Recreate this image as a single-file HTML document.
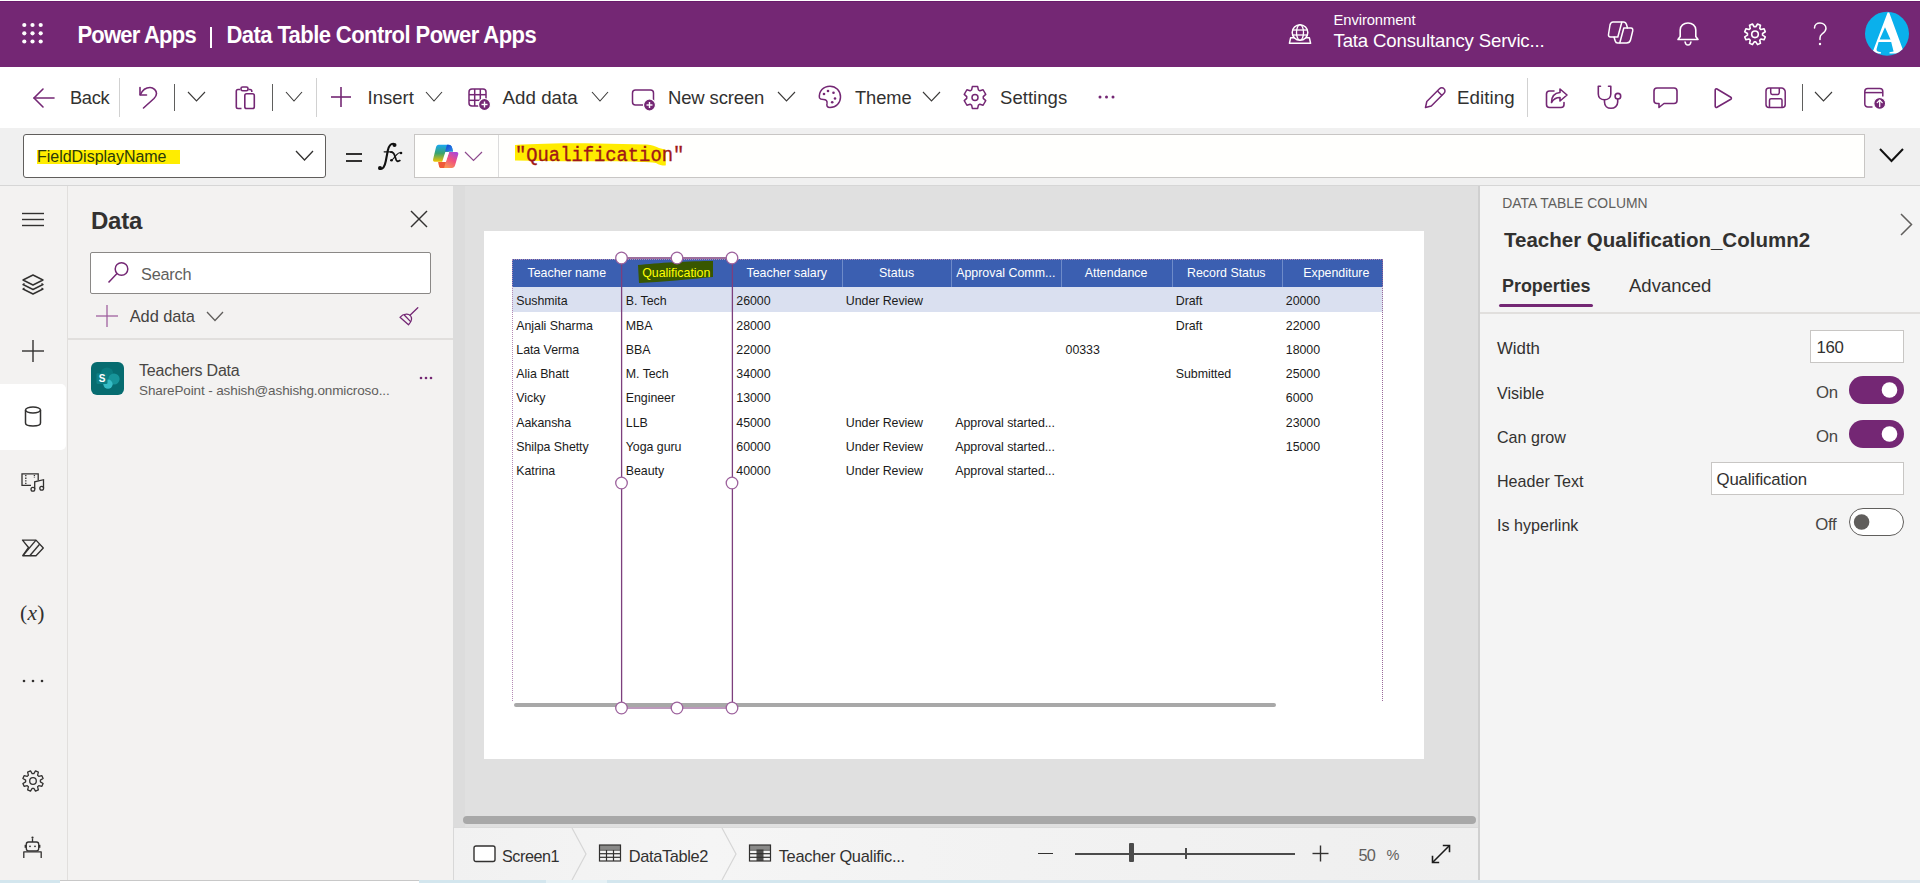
<!DOCTYPE html>
<html><head><meta charset="utf-8"><style>
html,body{margin:0;padding:0;width:1920px;height:883px;overflow:hidden;background:#f3f2f1;}
.r,.t,.s{position:absolute;}
.t{white-space:nowrap;font-family:"Liberation Sans",sans-serif;}
</style></head><body>
<div class="r" style="left:0px;top:0px;width:1920px;height:883px;background:#f3f2f1;"></div>
<div class="r" style="left:0px;top:0px;width:1920px;height:1px;background:#ffffff;"></div>
<div class="r" style="left:0px;top:1px;width:1920px;height:66px;background:#742774;"></div>
<div class="r" style="left:0px;top:1px;width:1920px;height:1px;background:#6a1a6a;"></div>
<div class="r" style="left:0px;top:67px;width:1920px;height:61px;background:#ffffff;"></div>
<div class="r" style="left:0px;top:128px;width:1920px;height:57px;background:#f0f0f0;"></div>
<div class="r" style="left:0px;top:185px;width:1920px;height:1px;background:#d6d6d6;"></div>
<div class="r" style="left:0px;top:186px;width:67px;height:694px;background:#f3f2f1;"></div>
<div class="r" style="left:67px;top:186px;width:1px;height:694px;background:#e1dfdd;"></div>
<div class="r" style="left:68px;top:186px;width:385px;height:694px;background:#f3f2f1;"></div>
<div class="r" style="left:453px;top:186px;width:1026px;height:642px;background:#e0e0e0;"></div>
<div class="r" style="left:453px;top:186px;width:12px;height:642px;background:#dcdcdc;"></div>
<div class="r" style="left:1478px;top:186px;width:2px;height:694px;background:#d0d0d0;"></div>
<div class="r" style="left:1480px;top:186px;width:440px;height:694px;background:#f4f4f4;"></div>
<div class="r" style="left:0px;top:880px;width:1920px;height:3px;background:#d3e6ee;"></div>
<svg class="s" style="left:0px;top:0px;" width="60" height="67" viewBox="0 0 60 67"><circle cx="24.3" cy="25" r="2.1" fill="#fff"/><circle cx="24.3" cy="33.3" r="2.1" fill="#fff"/><circle cx="24.3" cy="41.5" r="2.1" fill="#fff"/><circle cx="32.5" cy="25" r="2.1" fill="#fff"/><circle cx="32.5" cy="33.3" r="2.1" fill="#fff"/><circle cx="32.5" cy="41.5" r="2.1" fill="#fff"/><circle cx="40.7" cy="25" r="2.1" fill="#fff"/><circle cx="40.7" cy="33.3" r="2.1" fill="#fff"/><circle cx="40.7" cy="41.5" r="2.1" fill="#fff"/></svg>
<div class="t" style="left:77.50px;top:24.88px;font-size:22px;line-height:22px;color:#fff;font-weight:bold;letter-spacing:-0.8px;font-family:'Liberation Sans', sans-serif;transform:scaleY(1.1);transform-origin:0 18.6px;">Power Apps</div>
<div class="r" style="left:209.5px;top:26.5px;width:2.5px;height:21px;background:#fff;"></div>
<div class="t" style="left:226.50px;top:24.88px;font-size:22px;line-height:22px;color:#fff;font-weight:bold;letter-spacing:-0.58px;font-family:'Liberation Sans', sans-serif;transform:scaleY(1.1);transform-origin:0 18.6px;">Data Table Control Power Apps</div>
<svg class="s" style="left:1286px;top:22px;" width="28" height="26" viewBox="0 0 28 26"><path d="M4.6 15.8 H23.4 L24.6 21.3 H3.4 Z" fill="none" stroke="#fff" stroke-width="1.5" stroke-linejoin="round"/><circle cx="14" cy="10.5" r="7.8" fill="#742774" stroke="#fff" stroke-width="1.5"/><g fill="none" stroke="#fff" stroke-width="1.3"><ellipse cx="14" cy="10.5" rx="3.5" ry="7.8"/><line x1="6.5" y1="8" x2="21.5" y2="8"/><line x1="6.5" y1="13" x2="21.5" y2="13"/></g></svg>
<div class="t" style="left:1333.50px;top:12.77px;font-size:14.8px;line-height:14.8px;color:#fff;font-weight:normal;letter-spacing:-0.1px;font-family:'Liberation Sans', sans-serif;">Environment</div>
<div class="t" style="left:1333.50px;top:31.56px;font-size:18.6px;line-height:18.6px;color:#fff;font-weight:normal;letter-spacing:-0.15px;font-family:'Liberation Sans', sans-serif;">Tata Consultancy Servic...</div>
<svg class="s" style="left:1600px;top:14px;" width="40" height="38" viewBox="0 0 40 38"><g fill="none" stroke="#fff" stroke-width="1.5" stroke-linejoin="round" stroke-linecap="round"><path d="M13 8 H23.5 C25 8 26 9 26.5 10.5 L27.5 14 H31 C32.5 14 33 15.5 32.7 17 L30.5 26 C30 28 28.5 29 26.5 29 H17.5 C16.5 29 15.5 28 15.2 27 L14 23 H10.5 C9 23 8.3 22 8.5 20.5 L10 11 C10.5 9 11.5 8 13 8 Z"/><path d="M21.8 8.3 L17.8 23 H14.2"/><path d="M27.3 14 H23.8 L19.8 28.8"/></g></svg>
<svg class="s" style="left:1672px;top:18px;" width="32" height="32" viewBox="0 0 32 32"><g fill="none" stroke="#fff" stroke-width="1.6" stroke-linejoin="round"><path d="M6 21.5 H26 L23.8 18.5 V12 C23.8 7.8 20.3 5 16 5 C11.7 5 8.2 7.8 8.2 12 V18.5 Z"/><path d="M13 23.5 C13.3 25.8 14.5 27 16 27 C17.5 27 18.7 25.8 19 23.5"/></g></svg>
<svg class="s" style="left:1739px;top:18px;" width="32" height="32" viewBox="0 0 32 32"><path d="M18.55 6.01 L21.47 7.22 L20.74 10.36 L21.94 11.56 L25.08 10.83 L26.29 13.75 L23.55 15.45 L23.55 17.15 L26.29 18.85 L25.08 21.77 L21.94 21.04 L20.74 22.24 L21.47 25.38 L18.55 26.59 L16.85 23.85 L15.15 23.85 L13.45 26.59 L10.53 25.38 L11.26 22.24 L10.06 21.04 L6.92 21.77 L5.71 18.85 L8.45 17.15 L8.45 15.45 L5.71 13.75 L6.92 10.83 L10.06 11.56 L11.26 10.36 L10.53 7.22 L13.45 6.01 L15.15 8.75 L16.85 8.75Z" fill="none" stroke="#fff" stroke-width="1.6" stroke-linejoin="round"/><circle cx="16" cy="16.3" r="3.3" fill="none" stroke="#fff" stroke-width="1.6"/></svg>
<svg class="s" style="left:1805px;top:18px;" width="30" height="32" viewBox="0 0 30 32"><g fill="none" stroke="#fff" stroke-width="1.5" stroke-linecap="round"><path d="M9.5 10 C9.5 6.8 12 5 15 5 C18.3 5 21 7.3 21 10.3 C21 13.3 19 14.5 17 16 C15.5 17.1 15 18 15 20 V21.5"/></g><circle cx="15" cy="26" r="1.2" fill="#fff"/></svg>
<svg class="s" style="left:1860px;top:8px;" width="54" height="52" viewBox="0 0 54 52"><defs><clipPath id="avc"><circle cx="27" cy="25.7" r="22"/></clipPath></defs><circle cx="27" cy="25.7" r="22" fill="#0ab0ec"/><path clip-path="url(#avc)" fill-rule="evenodd" fill="#fff" d="M27.6 4.6 L29.2 4.6 L43 42 L45.5 45.5 L29.5 45.5 L29.5 44.3 L33.6 43.6 L31.2 34 L18.6 34 L16.6 41 C16.2 43 17.5 43.8 21 44.2 L21 45.5 L10.5 45.5 L13.4 42 Z M25 19.3 L19.6 31.6 L30.5 31.6 Z"/></svg>
<svg class="s" style="left:31px;top:86px;" width="26" height="24" viewBox="0 0 26 24"><g fill="none" stroke="#742774" stroke-width="1.6" stroke-linecap="round" stroke-linejoin="round"><path d="M12 3 L3 12 L12 21"/><line x1="3" y1="12" x2="23" y2="12"/></g></svg>
<div class="t" style="left:70.00px;top:89.41px;font-size:18.3px;line-height:18.3px;color:#323130;font-weight:normal;letter-spacing:-0.35px;font-family:'Liberation Sans', sans-serif;">Back</div>
<div class="r" style="left:119px;top:78px;width:1px;height:39px;background:#d1d1d1;"></div>
<svg class="s" style="left:136px;top:85px;" width="24" height="26" viewBox="0 0 24 26"><g fill="none" stroke="#742774" stroke-width="1.6" stroke-linecap="round" stroke-linejoin="round"><path d="M4 2.5 V10 H10.5"/><path d="M4.5 9.5 C6.5 5 10 2.5 14 2.5 C17.5 2.5 20.5 5.5 20.5 8.5 C20.5 10.5 19.5 12 18 13.5 L7.5 23"/></g></svg>
<div class="r" style="left:174px;top:84px;width:1px;height:27px;background:#5f5e5d;"></div>
<svg class="s" style="left:186px;top:90px;" width="21" height="13" viewBox="0 0 21 13"><polyline points="2,2 10.5,11 19,2" fill="none" stroke="#3b3a39" stroke-width="1.1"/></svg>
<svg class="s" style="left:233px;top:85px;" width="26" height="27" viewBox="0 0 26 27"><g fill="none" stroke="#742774" stroke-width="1.6" stroke-linejoin="round"><path d="M7 4.5 H5 C3.9 4.5 3.3 5.2 3.3 6.3 V21.8 C3.3 22.9 3.9 23.5 5 23.5 H8.5"/><path d="M15.5 4.5 H17 C18.1 4.5 18.8 5.2 18.8 6.3 V7"/><rect x="8" y="2" width="7" height="3.8" rx="1.6"/><rect x="11.8" y="8.7" width="9.5" height="14.8" rx="1.8"/></g></svg>
<div class="r" style="left:272px;top:84px;width:1px;height:27px;background:#5f5e5d;"></div>
<svg class="s" style="left:284px;top:90px;" width="20" height="13" viewBox="0 0 20 13"><polyline points="2,2 10.0,11 18,2" fill="none" stroke="#3b3a39" stroke-width="1.1"/></svg>
<div class="r" style="left:316px;top:78px;width:1px;height:39px;background:#d1d1d1;"></div>
<svg class="s" style="left:329px;top:85px;" width="24" height="24" viewBox="0 0 24 24"><g stroke="#742774" stroke-width="1.6"><line x1="12" y1="2" x2="12" y2="22"/><line x1="2" y1="12" x2="22" y2="12"/></g></svg>
<div class="t" style="left:367.50px;top:89.24px;font-size:18.5px;line-height:18.5px;color:#323130;font-weight:normal;letter-spacing:0px;font-family:'Liberation Sans', sans-serif;">Insert</div>
<svg class="s" style="left:424px;top:90px;" width="20" height="13" viewBox="0 0 20 13"><polyline points="2,2 10.0,11 18,2" fill="none" stroke="#3b3a39" stroke-width="1.1"/></svg>
<svg class="s" style="left:466px;top:86px;" width="26" height="26" viewBox="0 0 26 26"><g fill="none" stroke="#742774" stroke-width="1.5"><rect x="3" y="3" width="17" height="17" rx="3"/><line x1="3" y1="8.7" x2="20" y2="8.7"/><line x1="3" y1="14.3" x2="14" y2="14.3"/><line x1="8.7" y1="3" x2="8.7" y2="20"/><line x1="14.3" y1="3" x2="14.3" y2="14"/></g><circle cx="18.5" cy="18.5" r="6" fill="#742774" stroke="#fff" stroke-width="1.2"/><g stroke="#fff" stroke-width="1.4"><line x1="18.5" y1="15.5" x2="18.5" y2="21.5"/><line x1="15.5" y1="18.5" x2="21.5" y2="18.5"/></g></svg>
<div class="t" style="left:502.50px;top:89.07px;font-size:18.7px;line-height:18.7px;color:#323130;font-weight:normal;letter-spacing:0.05px;font-family:'Liberation Sans', sans-serif;">Add data</div>
<svg class="s" style="left:589.5px;top:90px;" width="20" height="13" viewBox="0 0 20 13"><polyline points="2,2 10.0,11 18,2" fill="none" stroke="#3b3a39" stroke-width="1.1"/></svg>
<svg class="s" style="left:630px;top:86px;" width="28" height="26" viewBox="0 0 28 26"><g fill="none" stroke="#742774" stroke-width="1.5"><rect x="2.5" y="4" width="21" height="15" rx="3"/></g><circle cx="19.5" cy="19" r="6" fill="#742774" stroke="#fff" stroke-width="1.2"/><g stroke="#fff" stroke-width="1.4"><line x1="19.5" y1="16" x2="19.5" y2="22"/><line x1="16.5" y1="19" x2="22.5" y2="19"/></g></svg>
<div class="t" style="left:668.00px;top:89.24px;font-size:18.5px;line-height:18.5px;color:#323130;font-weight:normal;letter-spacing:-0.15px;font-family:'Liberation Sans', sans-serif;">New screen</div>
<svg class="s" style="left:775.5px;top:90px;" width="21" height="13" viewBox="0 0 21 13"><polyline points="2,2 10.5,11 19,2" fill="none" stroke="#3b3a39" stroke-width="1.1"/></svg>
<svg class="s" style="left:815px;top:85px;" width="28" height="26" viewBox="0 0 28 26"><g fill="none" stroke="#742774" stroke-width="1.5"><path d="M4.5 13 C3.5 6 8.5 1.2 15 1.2 C21 1.2 25.5 6 25.5 12 C25.5 18 21 22.5 15 22.5 C12 22.5 11.5 20.5 12 18.5 C12.5 16 11 14.5 8.5 14.5 C6.5 14.5 5 14 4.5 13 Z"/></g><g fill="#742774"><circle cx="9" cy="9" r="1.3"/><circle cx="13" cy="6" r="1.3"/><circle cx="18.5" cy="7.8" r="1.3"/><circle cx="20" cy="13.5" r="1.3"/><circle cx="17.2" cy="17.3" r="1.3"/></g></svg>
<div class="t" style="left:855.00px;top:89.41px;font-size:18.3px;line-height:18.3px;color:#323130;font-weight:normal;letter-spacing:-0.05px;font-family:'Liberation Sans', sans-serif;">Theme</div>
<svg class="s" style="left:921px;top:90px;" width="21" height="13" viewBox="0 0 21 13"><polyline points="2,2 10.5,11 19,2" fill="none" stroke="#3b3a39" stroke-width="1.1"/></svg>
<svg class="s" style="left:961px;top:84px;" width="28" height="28" viewBox="0 0 28 28"><path d="M11.34 2.62 L16.66 2.62 L17.38 5.92 L18.87 6.78 L22.09 5.75 L24.75 10.37 L22.26 12.64 L22.26 14.36 L24.75 16.63 L22.09 21.25 L18.87 20.22 L17.38 21.08 L16.66 24.38 L11.34 24.38 L10.62 21.08 L9.13 20.22 L5.91 21.25 L3.25 16.63 L5.74 14.36 L5.74 12.64 L3.25 10.37 L5.91 5.75 L9.13 6.78 L10.62 5.92Z" fill="none" stroke="#742774" stroke-width="1.5" stroke-linejoin="round"/><circle cx="14" cy="13.5" r="3.0" fill="none" stroke="#742774" stroke-width="1.5"/></svg>
<div class="t" style="left:1000.00px;top:89.24px;font-size:18.5px;line-height:18.5px;color:#323130;font-weight:normal;letter-spacing:0.05px;font-family:'Liberation Sans', sans-serif;">Settings</div>
<svg class="s" style="left:1097px;top:93px;" width="20" height="8" viewBox="0 0 20 8"><g fill="#742774"><circle cx="3" cy="4" r="1.5"/><circle cx="9.5" cy="4" r="1.5"/><circle cx="16" cy="4" r="1.5"/></g></svg>
<svg class="s" style="left:1422px;top:85px;" width="26" height="26" viewBox="0 0 26 26"><g fill="none" stroke="#742774" stroke-width="1.5" stroke-linejoin="round"><path d="M3.5 22.5 L4.8 16.5 L17.5 3.8 C18.8 2.5 20.8 2.5 22 3.8 C23.3 5 23.3 7 22 8.3 L9.3 21 Z"/><line x1="15.5" y1="6" x2="20" y2="10.5"/></g></svg>
<div class="t" style="left:1457.00px;top:89.07px;font-size:18.7px;line-height:18.7px;color:#323130;font-weight:normal;letter-spacing:0.1px;font-family:'Liberation Sans', sans-serif;">Editing</div>
<div class="r" style="left:1527px;top:78px;width:1px;height:39px;background:#d1d1d1;"></div>
<svg class="s" style="left:1543px;top:85px;" width="28" height="26" viewBox="0 0 28 26"><g fill="none" stroke="#742774" stroke-width="1.6" stroke-linejoin="round" stroke-linecap="round"><path d="M11 6 H6.5 C4.8 6 3.5 7.3 3.5 9 V19.5 C3.5 21.2 4.8 22.5 6.5 22.5 H18 C19.7 22.5 21 21.2 21 19.5 V17.5"/><path d="M17 4 L24 10 L17 16 V12.5 C13 12.5 10.5 14 8.5 17.5 C8.5 12 11.5 8 17 7.5 Z"/></g></svg>
<svg class="s" style="left:1594px;top:82px;" width="32" height="32" viewBox="0 0 32 32"><g fill="none" stroke="#742774" stroke-width="1.6" stroke-linecap="round" stroke-linejoin="round"><path d="M6.5 4.3 H4.3 V12 C4.3 15.5 7 17.8 10.5 17.8 C14 17.8 16.8 15.5 16.8 12 V4.3 H14.5"/><path d="M10.5 17.8 V20 C10.5 23.8 13.3 26.3 17 26.3 C20.7 26.3 23.7 23.8 23.7 20 V17.2"/><circle cx="23.9" cy="14.2" r="2.8"/></g></svg>
<svg class="s" style="left:1651px;top:84px;" width="30" height="28" viewBox="0 0 30 28"><g fill="none" stroke="#742774" stroke-width="1.6" stroke-linejoin="round"><path d="M6 4 H23 C24.7 4 26 5.3 26 7 V16.5 C26 18.2 24.7 19.5 23 19.5 H13 L8 23.5 V19.5 H6 C4.3 19.5 3 18.2 3 16.5 V7 C3 5.3 4.3 4 6 4 Z"/></g></svg>
<svg class="s" style="left:1710px;top:84px;" width="26" height="28" viewBox="0 0 26 28"><g fill="none" stroke="#742774" stroke-width="1.6" stroke-linejoin="round"><path d="M5.2 6 C5.2 5 6.2 4.5 7 5 L20.8 13.3 C21.6 13.8 21.6 14.8 20.8 15.3 L7 23.3 C6.2 23.8 5.2 23.3 5.2 22.3 Z"/></g></svg>
<svg class="s" style="left:1763px;top:84px;" width="28" height="28" viewBox="0 0 28 28"><g fill="none" stroke="#742774" stroke-width="1.5" stroke-linejoin="round"><path d="M3 7 C3 5.3 4.3 4 6 4 H18.5 C19.5 4 20.3 4.4 21 5.1 C21.8 5.9 22.2 6.8 22.2 7.8 V20.5 C22.2 22.2 20.9 23.5 19.2 23.5 H6 C4.3 23.5 3 22.2 3 20.5 Z"/><path d="M7.7 4 V8.6 C7.7 9.6 8.2 10.4 9.2 10.4 H14.8 C15.8 10.4 16.3 9.6 16.3 8.6 V4"/><path d="M6.5 23.5 V16.2 C6.5 15.3 7.2 14.7 8 14.7 H17.5 C18.4 14.7 19 15.3 19 16.2 V23.5"/></g></svg>
<div class="r" style="left:1802px;top:84px;width:1px;height:27px;background:#5f5e5d;"></div>
<svg class="s" style="left:1813px;top:90px;" width="21" height="13" viewBox="0 0 21 13"><polyline points="2,2 10.5,11 19,2" fill="none" stroke="#3b3a39" stroke-width="1.1"/></svg>
<svg class="s" style="left:1861px;top:84px;" width="30" height="30" viewBox="0 0 30 30"><g fill="none" stroke="#742774" stroke-width="1.5"><path d="M11.5 23 H6.8 C5.1 23 3.8 21.7 3.8 20 V7.5 C3.8 5.8 5.1 4.5 6.8 4.5 H18.8 C20.5 4.5 21.8 5.8 21.8 7.5 V12.5"/><line x1="3.8" y1="8.6" x2="21.8" y2="8.6"/></g><circle cx="18.7" cy="19.4" r="5.9" fill="#742774" stroke="#fff" stroke-width="1.1"/><g stroke="#fff" stroke-width="1.3" fill="none" stroke-linecap="round" stroke-linejoin="round"><line x1="18.7" y1="22.6" x2="18.7" y2="16.3"/><polyline points="16.2,18.6 18.7,16.1 21.2,18.6"/></g></svg>
<div class="r" style="left:23px;top:134px;width:303px;height:44px;background:#ffffff;border:1px solid #605e5c;border-radius:3px;box-sizing:border-box;"></div>
<div class="r" style="left:37px;top:149.5px;width:143px;height:14.5px;background:#ffed00;"></div>
<div class="t" style="left:37.00px;top:148.96px;font-size:16px;line-height:16px;color:#2b3a0a;font-weight:normal;letter-spacing:-0.02px;font-family:'Liberation Sans', sans-serif;">FieldDisplayName</div>
<svg class="s" style="left:293.5px;top:149px;" width="21" height="13" viewBox="0 0 21 13"><polyline points="2,2 10.5,11 19,2" fill="none" stroke="#323130" stroke-width="1.3"/></svg>
<div class="r" style="left:345.5px;top:153px;width:16px;height:2px;background:#323130;"></div>
<div class="r" style="left:345.5px;top:160px;width:16px;height:2px;background:#323130;"></div>
<svg class="s" style="left:370px;top:138px;" width="40" height="36" viewBox="0 0 40 36"><g fill="none" stroke="#111" stroke-linecap="round"><path d="M9.5 30.8 C12.8 31.6 14.8 28.5 15.8 23 L17.8 12.5 C18.8 8 20.5 5.7 23.3 5.8" stroke-width="2.1"/><line x1="14.2" y1="13.8" x2="22" y2="13.8" stroke-width="1.3"/><path d="M21 14.2 C23.6 14 24.3 16 25 18.5 L26.2 22 C26.8 23.5 28.3 23.6 29.8 22.6" stroke-width="1.8"/><path d="M31.2 14.5 C29.5 14.2 28 15 26.5 16.8 L23 21 C22 22.3 21.4 22.6 20.8 22.4" stroke-width="1.1"/></g><g fill="#111"><circle cx="10" cy="30" r="2"/><circle cx="24.5" cy="7" r="2"/><circle cx="21.5" cy="22.2" r="1.3"/><circle cx="31" cy="15" r="1.3"/></g></svg>
<div class="r" style="left:414px;top:134px;width:1451px;height:44px;background:#fffffd;border:1px solid #c8c6c4;box-sizing:border-box;"></div>
<div class="r" style="left:498px;top:135px;width:1px;height:42px;background:#dcdcdc;"></div>
<svg class="s" style="left:426px;top:138px;" width="36" height="34" viewBox="0 0 36 34"><defs>
<linearGradient id="cg1" x1="0" y1="0" x2="0" y2="1"><stop offset="0" stop-color="#19a8f2"/><stop offset="0.5" stop-color="#3aa36e"/><stop offset="1" stop-color="#f4c400"/></linearGradient>
<linearGradient id="cg2" x1="1" y1="0" x2="0.3" y2="1"><stop offset="0" stop-color="#9d46ea"/><stop offset="0.5" stop-color="#f0527e"/><stop offset="1" stop-color="#fba24c"/></linearGradient>
<linearGradient id="cg3" x1="0" y1="0" x2="1" y2="1"><stop offset="0" stop-color="#1340cc"/><stop offset="1" stop-color="#2c8ff0"/></linearGradient>
</defs>
<path d="M12.5 6.8 H22.5 C24.5 6.8 25.5 8 26.2 10 L27 13.6 H22.8 L19.7 23.8 H8.7 C7.3 23.8 6.8 22.8 7.1 21.3 L10 9.3 C10.4 7.8 11.3 6.8 12.5 6.8 Z" fill="url(#cg1)"/>
<path d="M21 6.8 H22.5 C24.5 6.8 25.5 8 26.2 10 L27 13.6 H19.1 Z" fill="url(#cg3)"/>
<path d="M23 14 H30.5 C32 14 32.6 15 32.2 16.5 L29 27.5 C28.5 29 27.5 30 25.8 30 H14.8 C14 30 13.4 29.3 13.1 28.5 L12.3 24 H19.6 Z" fill="url(#cg2)"/>
<path d="M12.3 24 H19.6 L18.1 30 H14.8 C14 30 13.4 29.3 13.1 28.5 Z" fill="#ef5a38"/><path d="M19.3 13.9 H23.2 L19.9 23.9 H16.1 Z" fill="#fff"/></svg>
<svg class="s" style="left:463px;top:150.3px;" width="21" height="12.5" viewBox="0 0 21 12.5"><polyline points="2,2 10.5,10.5 19,2" fill="none" stroke="#8d4a8d" stroke-width="1.2"/></svg>
<svg class="s" style="left:510px;top:140px;" width="170" height="30" viewBox="0 0 170 30"><path d="M5 4.9 C25 3.6 50 3.1 75 3.2 L137 4.6 C142 5 145 6.5 149 8 L155.8 9.8 L155.8 25.2 C155 26 150 25.5 146 23 C140 21.6 100 21.2 50 21.2 L5 20.6 Z" fill="#ffec00"/></svg>
<div class="t" style="left:515.30px;top:146.17px;font-size:20px;line-height:20px;color:#a01818;font-weight:normal;letter-spacing:0px;font-family:'Liberation Mono', monospace;transform:scaleX(0.94);transform-origin:0 0;-webkit-text-stroke:0.35px #a01818;">"Qualification"</div>
<svg class="s" style="left:1878px;top:147px;" width="27" height="16" viewBox="0 0 27 16"><polyline points="2,2 13.5,14 25,2" fill="none" stroke="#111" stroke-width="2"/></svg>
<svg class="s" style="left:19px;top:209px;" width="28" height="20" viewBox="0 0 28 20"><g stroke="#323130" stroke-width="1.4"><line x1="3" y1="4.5" x2="25" y2="4.5"/><line x1="3" y1="10.5" x2="25" y2="10.5"/><line x1="3" y1="16.5" x2="25" y2="16.5"/></g></svg>
<svg class="s" style="left:19px;top:272px;" width="28" height="26" viewBox="0 0 28 26"><g fill="none" stroke="#323130" stroke-width="1.4" stroke-linejoin="round"><path d="M14 3 L24 8 L14 13 L4 8 Z"/><path d="M5.5 11.5 L4 12.5 L14 17.5 L24 12.5 L22.5 11.5"/><path d="M5.5 16 L4 17 L14 22 L24 17 L22.5 16"/></g></svg>
<svg class="s" style="left:19px;top:337px;" width="28" height="28" viewBox="0 0 28 28"><g stroke="#323130" stroke-width="1.4"><line x1="14" y1="3" x2="14" y2="25"/><line x1="3" y1="14" x2="25" y2="14"/></g></svg>
<div class="r" style="left:0px;top:384px;width:66px;height:66px;background:#ffffff;border-radius:0 5px 5px 0;"></div>
<svg class="s" style="left:20px;top:403px;" width="26" height="28" viewBox="0 0 26 28"><g fill="none" stroke="#323130" stroke-width="1.5"><ellipse cx="13" cy="7" rx="7.5" ry="3"/><path d="M5.5 7 V20 C5.5 21.7 8.8 23 13 23 C17.2 23 20.5 21.7 20.5 20 V7"/></g></svg>
<svg class="s" style="left:19px;top:470px;" width="28" height="26" viewBox="0 0 28 26"><g fill="none" stroke="#323130" stroke-width="1.3"><path d="M12 15.3 H3 V3.8 H19.2 V10.5"/><line x1="6.8" y1="5" x2="6.8" y2="14.5" stroke-dasharray="1.3 1.3"/><line x1="15.4" y1="5" x2="15.4" y2="8" stroke-dasharray="1.3 1.3"/><path d="M15.7 19 V11.8 L24.5 9.7 V18"/><circle cx="13.9" cy="19.2" r="1.9"/><circle cx="22.7" cy="18.2" r="1.9"/></g></svg>
<svg class="s" style="left:16px;top:533px;" width="34" height="30" viewBox="0 0 34 30"><g fill="none" stroke="#323130" stroke-width="1.35" stroke-linejoin="round"><path d="M6.5 7.1 H20 L27.3 15 L20 22.7 H6.8 L12.5 14.5 Z"/><line x1="20" y1="7.1" x2="6.8" y2="22.7"/><line x1="23.6" y1="11.3" x2="13.8" y2="22.7"/></g></svg>
<div class="t" style="left:20.00px;top:603.02px;font-size:21.5px;line-height:21.5px;color:#323130;font-weight:normal;letter-spacing:0.3px;font-family:'Liberation Serif', serif;">(<i>x</i>)</div>
<svg class="s" style="left:19px;top:674px;" width="28" height="14" viewBox="0 0 28 14"><g fill="#323130"><circle cx="5" cy="7" r="1.3"/><circle cx="14" cy="7" r="1.3"/><circle cx="23" cy="7" r="1.3"/></g></svg>
<svg class="s" style="left:19px;top:767px;" width="28" height="28" viewBox="0 0 28 28"><path d="M16.50 3.90 L19.37 5.09 L18.61 8.21 L19.79 9.39 L22.91 8.63 L24.10 11.50 L21.35 13.17 L21.35 14.83 L24.10 16.50 L22.91 19.37 L19.79 18.61 L18.61 19.79 L19.37 22.91 L16.50 24.10 L14.83 21.35 L13.17 21.35 L11.50 24.10 L8.63 22.91 L9.39 19.79 L8.21 18.61 L5.09 19.37 L3.90 16.50 L6.65 14.83 L6.65 13.17 L3.90 11.50 L5.09 8.63 L8.21 9.39 L9.39 8.21 L8.63 5.09 L11.50 3.90 L13.17 6.65 L14.83 6.65Z" fill="none" stroke="#323130" stroke-width="1.3" stroke-linejoin="round"/><circle cx="14" cy="14" r="3.3" fill="none" stroke="#323130" stroke-width="1.3"/></svg>
<svg class="s" style="left:19px;top:834px;" width="28" height="27" viewBox="0 0 28 27"><g fill="none" stroke="#323130" stroke-width="1.3" stroke-linejoin="round"><rect x="7.3" y="8" width="12.4" height="8.8" rx="2.2"/><line x1="13.5" y1="4.5" x2="13.5" y2="8"/><path d="M4.8 24 V17.8 H22.2 V24"/></g><circle cx="13.5" cy="3.6" r="1.1" fill="#323130"/><circle cx="11" cy="12.3" r="0.9" fill="#323130"/><circle cx="16" cy="12.3" r="0.9" fill="#323130"/><rect x="5.6" y="10.8" width="1.4" height="3" fill="#323130"/><rect x="20" y="10.8" width="1.4" height="3" fill="#323130"/></svg>
<div class="t" style="left:91.00px;top:208.68px;font-size:24px;line-height:24px;color:#323130;font-weight:bold;letter-spacing:-0.25px;font-family:'Liberation Sans', sans-serif;">Data</div>
<svg class="s" style="left:408px;top:208px;" width="22" height="22" viewBox="0 0 22 22"><g stroke="#323130" stroke-width="1.35"><line x1="3" y1="3" x2="19" y2="19"/><line x1="19" y1="3" x2="3" y2="19"/></g></svg>
<div class="r" style="left:90px;top:252px;width:341px;height:42px;background:#ffffff;border:1px solid #8a8886;border-radius:2px;box-sizing:border-box;"></div>
<svg class="s" style="left:105px;top:259px;" width="28" height="28" viewBox="0 0 28 28"><g fill="none" stroke="#742774" stroke-width="1.5"><circle cx="16.5" cy="10" r="6.3"/><line x1="12" y1="14.5" x2="3.5" y2="23.5"/></g></svg>
<div class="t" style="left:141.00px;top:266.20px;font-size:16.3px;line-height:16.3px;color:#605e5c;font-weight:normal;letter-spacing:-0.2px;font-family:'Liberation Sans', sans-serif;">Search</div>
<svg class="s" style="left:94px;top:303px;" width="26" height="26" viewBox="0 0 26 26"><g stroke="#9c5c9c" stroke-width="1.25"><line x1="13" y1="2" x2="13" y2="24"/><line x1="2" y1="13" x2="24" y2="13"/></g></svg>
<div class="t" style="left:129.70px;top:308.12px;font-size:16.4px;line-height:16.4px;color:#454341;font-weight:normal;letter-spacing:-0.05px;font-family:'Liberation Sans', sans-serif;">Add data</div>
<svg class="s" style="left:205px;top:309.5px;" width="20" height="12.5" viewBox="0 0 20 12.5"><polyline points="2,2 10.0,10.5 18,2" fill="none" stroke="#605e5c" stroke-width="1.3"/></svg>
<svg class="s" style="left:397px;top:305px;" width="24" height="24" viewBox="0 0 24 24"><g fill="none" stroke="#742774" stroke-width="1.3" stroke-linejoin="round" stroke-linecap="round"><path d="M3 12.3 L11.5 19.8 C13.5 17.5 15 15.5 14.5 13 C14 10.5 11.5 9 9 9.2 C7 9.3 4.5 10.5 3 12.3 Z"/><path d="M7.5 10.2 L13.6 16.6"/><path d="M13 10.2 L20.8 2.8"/></g></svg>
<div class="r" style="left:68px;top:338px;width:385px;height:2px;background:#e1dfdd;"></div>
<svg class="s" style="left:91px;top:362px;" width="34" height="34" viewBox="0 0 34 34"><rect x="0" y="0" width="33" height="33" rx="6" fill="#066c70"/><circle cx="16" cy="11.8" r="6.3" fill="#0a7a7e"/><circle cx="23" cy="17" r="5.6" fill="#17959a"/><circle cx="17" cy="22.2" r="4.6" fill="#36bcc5"/><rect x="5.5" y="11.2" width="11" height="10.8" rx="1.2" fill="#0d8085"/><text x="11" y="20.2" font-family="Liberation Sans" font-weight="bold" font-size="10" fill="#fff" text-anchor="middle">S</text></svg>
<div class="t" style="left:139.00px;top:362.96px;font-size:16px;line-height:16px;color:#484644;font-weight:normal;letter-spacing:-0.2px;font-family:'Liberation Sans', sans-serif;">Teachers Data</div>
<div class="t" style="left:139.00px;top:383.57px;font-size:13.5px;line-height:13.5px;color:#605e5c;font-weight:normal;letter-spacing:-0.12px;font-family:'Liberation Sans', sans-serif;">SharePoint - ashish@ashishg.onmicroso...</div>
<svg class="s" style="left:417px;top:373px;" width="18" height="10" viewBox="0 0 18 10"><g fill="#742774"><circle cx="4" cy="5" r="1.3"/><circle cx="9" cy="5" r="1.3"/><circle cx="14" cy="5" r="1.3"/></g></svg>
<div class="r" style="left:484px;top:231px;width:940px;height:528px;background:#ffffff;"></div>
<div class="r" style="left:512px;top:259px;width:871px;height:28px;background:#3b5fb1;"></div>
<div class="r" style="left:841.5px;top:259px;width:1px;height:28px;background:#6e8bc9;"></div>
<div class="r" style="left:951px;top:259px;width:1px;height:28px;background:#6e8bc9;"></div>
<div class="r" style="left:1061.3px;top:259px;width:1px;height:28px;background:#6e8bc9;"></div>
<div class="r" style="left:1171.5px;top:259px;width:1px;height:28px;background:#6e8bc9;"></div>
<div class="r" style="left:1281.5px;top:259px;width:1px;height:28px;background:#6e8bc9;"></div>
<div class="r" style="left:512px;top:287px;width:871px;height:25px;background:#dae0f0;"></div>
<svg class="s" style="left:636px;top:260px;" width="80" height="24" viewBox="0 0 80 24"><path d="M2 5 C20 3 55 1 77 1 L77 17 C55 19 25 22 3 23 Z" fill="#385700"/></svg>
<div class="t" style="left:527.51px;top:266.70px;font-size:12.4px;line-height:12.4px;color:#ffffff;font-weight:normal;letter-spacing:0px;font-family:'Liberation Sans', sans-serif;">Teacher name</div>
<div class="t" style="left:642.18px;top:266.70px;font-size:12.4px;line-height:12.4px;color:#ffff00;font-weight:normal;letter-spacing:0px;font-family:'Liberation Sans', sans-serif;">Qualification</div>
<div class="t" style="left:746.48px;top:266.70px;font-size:12.4px;line-height:12.4px;color:#ffffff;font-weight:normal;letter-spacing:0px;font-family:'Liberation Sans', sans-serif;">Teacher salary</div>
<div class="t" style="left:879.07px;top:266.70px;font-size:12.4px;line-height:12.4px;color:#ffffff;font-weight:normal;letter-spacing:0px;font-family:'Liberation Sans', sans-serif;">Status</div>
<div class="t" style="left:956.19px;top:266.70px;font-size:12.4px;line-height:12.4px;color:#ffffff;font-weight:normal;letter-spacing:0px;font-family:'Liberation Sans', sans-serif;">Approval Comm...</div>
<div class="t" style="left:1084.73px;top:266.70px;font-size:12.4px;line-height:12.4px;color:#ffffff;font-weight:normal;letter-spacing:0px;font-family:'Liberation Sans', sans-serif;">Attendance</div>
<div class="t" style="left:1187.01px;top:266.70px;font-size:12.4px;line-height:12.4px;color:#ffffff;font-weight:normal;letter-spacing:0px;font-family:'Liberation Sans', sans-serif;">Record Status</div>
<div class="t" style="left:1303.21px;top:266.70px;font-size:12.4px;line-height:12.4px;color:#ffffff;font-weight:normal;letter-spacing:0px;font-family:'Liberation Sans', sans-serif;">Expenditure</div>
<div class="t" style="left:516.30px;top:295.30px;font-size:12.4px;line-height:12.4px;color:#1b1b1b;font-weight:normal;letter-spacing:-0.05px;font-family:'Liberation Sans', sans-serif;">Sushmita</div>
<div class="t" style="left:625.80px;top:295.30px;font-size:12.4px;line-height:12.4px;color:#1b1b1b;font-weight:normal;letter-spacing:-0.05px;font-family:'Liberation Sans', sans-serif;">B. Tech</div>
<div class="t" style="left:736.30px;top:295.30px;font-size:12.4px;line-height:12.4px;color:#1b1b1b;font-weight:normal;letter-spacing:-0.05px;font-family:'Liberation Sans', sans-serif;">26000</div>
<div class="t" style="left:845.80px;top:295.30px;font-size:12.4px;line-height:12.4px;color:#1b1b1b;font-weight:normal;letter-spacing:-0.05px;font-family:'Liberation Sans', sans-serif;">Under Review</div>
<div class="t" style="left:1175.80px;top:295.30px;font-size:12.4px;line-height:12.4px;color:#1b1b1b;font-weight:normal;letter-spacing:-0.05px;font-family:'Liberation Sans', sans-serif;">Draft</div>
<div class="t" style="left:1285.80px;top:295.30px;font-size:12.4px;line-height:12.4px;color:#1b1b1b;font-weight:normal;letter-spacing:-0.05px;font-family:'Liberation Sans', sans-serif;">20000</div>
<div class="t" style="left:516.30px;top:319.56px;font-size:12.4px;line-height:12.4px;color:#1b1b1b;font-weight:normal;letter-spacing:-0.05px;font-family:'Liberation Sans', sans-serif;">Anjali Sharma</div>
<div class="t" style="left:625.80px;top:319.56px;font-size:12.4px;line-height:12.4px;color:#1b1b1b;font-weight:normal;letter-spacing:-0.05px;font-family:'Liberation Sans', sans-serif;">MBA</div>
<div class="t" style="left:736.30px;top:319.56px;font-size:12.4px;line-height:12.4px;color:#1b1b1b;font-weight:normal;letter-spacing:-0.05px;font-family:'Liberation Sans', sans-serif;">28000</div>
<div class="t" style="left:1175.80px;top:319.56px;font-size:12.4px;line-height:12.4px;color:#1b1b1b;font-weight:normal;letter-spacing:-0.05px;font-family:'Liberation Sans', sans-serif;">Draft</div>
<div class="t" style="left:1285.80px;top:319.56px;font-size:12.4px;line-height:12.4px;color:#1b1b1b;font-weight:normal;letter-spacing:-0.05px;font-family:'Liberation Sans', sans-serif;">22000</div>
<div class="t" style="left:516.30px;top:343.82px;font-size:12.4px;line-height:12.4px;color:#1b1b1b;font-weight:normal;letter-spacing:-0.05px;font-family:'Liberation Sans', sans-serif;">Lata Verma</div>
<div class="t" style="left:625.80px;top:343.82px;font-size:12.4px;line-height:12.4px;color:#1b1b1b;font-weight:normal;letter-spacing:-0.05px;font-family:'Liberation Sans', sans-serif;">BBA</div>
<div class="t" style="left:736.30px;top:343.82px;font-size:12.4px;line-height:12.4px;color:#1b1b1b;font-weight:normal;letter-spacing:-0.05px;font-family:'Liberation Sans', sans-serif;">22000</div>
<div class="t" style="left:1065.60px;top:343.82px;font-size:12.4px;line-height:12.4px;color:#1b1b1b;font-weight:normal;letter-spacing:-0.05px;font-family:'Liberation Sans', sans-serif;">00333</div>
<div class="t" style="left:1285.80px;top:343.82px;font-size:12.4px;line-height:12.4px;color:#1b1b1b;font-weight:normal;letter-spacing:-0.05px;font-family:'Liberation Sans', sans-serif;">18000</div>
<div class="t" style="left:516.30px;top:368.08px;font-size:12.4px;line-height:12.4px;color:#1b1b1b;font-weight:normal;letter-spacing:-0.05px;font-family:'Liberation Sans', sans-serif;">Alia Bhatt</div>
<div class="t" style="left:625.80px;top:368.08px;font-size:12.4px;line-height:12.4px;color:#1b1b1b;font-weight:normal;letter-spacing:-0.05px;font-family:'Liberation Sans', sans-serif;">M. Tech</div>
<div class="t" style="left:736.30px;top:368.08px;font-size:12.4px;line-height:12.4px;color:#1b1b1b;font-weight:normal;letter-spacing:-0.05px;font-family:'Liberation Sans', sans-serif;">34000</div>
<div class="t" style="left:1175.80px;top:368.08px;font-size:12.4px;line-height:12.4px;color:#1b1b1b;font-weight:normal;letter-spacing:-0.05px;font-family:'Liberation Sans', sans-serif;">Submitted</div>
<div class="t" style="left:1285.80px;top:368.08px;font-size:12.4px;line-height:12.4px;color:#1b1b1b;font-weight:normal;letter-spacing:-0.05px;font-family:'Liberation Sans', sans-serif;">25000</div>
<div class="t" style="left:516.30px;top:392.34px;font-size:12.4px;line-height:12.4px;color:#1b1b1b;font-weight:normal;letter-spacing:-0.05px;font-family:'Liberation Sans', sans-serif;">Vicky</div>
<div class="t" style="left:625.80px;top:392.34px;font-size:12.4px;line-height:12.4px;color:#1b1b1b;font-weight:normal;letter-spacing:-0.05px;font-family:'Liberation Sans', sans-serif;">Engineer</div>
<div class="t" style="left:736.30px;top:392.34px;font-size:12.4px;line-height:12.4px;color:#1b1b1b;font-weight:normal;letter-spacing:-0.05px;font-family:'Liberation Sans', sans-serif;">13000</div>
<div class="t" style="left:1285.80px;top:392.34px;font-size:12.4px;line-height:12.4px;color:#1b1b1b;font-weight:normal;letter-spacing:-0.05px;font-family:'Liberation Sans', sans-serif;">6000</div>
<div class="t" style="left:516.30px;top:416.60px;font-size:12.4px;line-height:12.4px;color:#1b1b1b;font-weight:normal;letter-spacing:-0.05px;font-family:'Liberation Sans', sans-serif;">Aakansha</div>
<div class="t" style="left:625.80px;top:416.60px;font-size:12.4px;line-height:12.4px;color:#1b1b1b;font-weight:normal;letter-spacing:-0.05px;font-family:'Liberation Sans', sans-serif;">LLB</div>
<div class="t" style="left:736.30px;top:416.60px;font-size:12.4px;line-height:12.4px;color:#1b1b1b;font-weight:normal;letter-spacing:-0.05px;font-family:'Liberation Sans', sans-serif;">45000</div>
<div class="t" style="left:845.80px;top:416.60px;font-size:12.4px;line-height:12.4px;color:#1b1b1b;font-weight:normal;letter-spacing:-0.05px;font-family:'Liberation Sans', sans-serif;">Under Review</div>
<div class="t" style="left:955.30px;top:416.60px;font-size:12.4px;line-height:12.4px;color:#1b1b1b;font-weight:normal;letter-spacing:-0.05px;font-family:'Liberation Sans', sans-serif;">Approval started...</div>
<div class="t" style="left:1285.80px;top:416.60px;font-size:12.4px;line-height:12.4px;color:#1b1b1b;font-weight:normal;letter-spacing:-0.05px;font-family:'Liberation Sans', sans-serif;">23000</div>
<div class="t" style="left:516.30px;top:440.86px;font-size:12.4px;line-height:12.4px;color:#1b1b1b;font-weight:normal;letter-spacing:-0.05px;font-family:'Liberation Sans', sans-serif;">Shilpa Shetty</div>
<div class="t" style="left:625.80px;top:440.86px;font-size:12.4px;line-height:12.4px;color:#1b1b1b;font-weight:normal;letter-spacing:-0.05px;font-family:'Liberation Sans', sans-serif;">Yoga guru</div>
<div class="t" style="left:736.30px;top:440.86px;font-size:12.4px;line-height:12.4px;color:#1b1b1b;font-weight:normal;letter-spacing:-0.05px;font-family:'Liberation Sans', sans-serif;">60000</div>
<div class="t" style="left:845.80px;top:440.86px;font-size:12.4px;line-height:12.4px;color:#1b1b1b;font-weight:normal;letter-spacing:-0.05px;font-family:'Liberation Sans', sans-serif;">Under Review</div>
<div class="t" style="left:955.30px;top:440.86px;font-size:12.4px;line-height:12.4px;color:#1b1b1b;font-weight:normal;letter-spacing:-0.05px;font-family:'Liberation Sans', sans-serif;">Approval started...</div>
<div class="t" style="left:1285.80px;top:440.86px;font-size:12.4px;line-height:12.4px;color:#1b1b1b;font-weight:normal;letter-spacing:-0.05px;font-family:'Liberation Sans', sans-serif;">15000</div>
<div class="t" style="left:516.30px;top:465.12px;font-size:12.4px;line-height:12.4px;color:#1b1b1b;font-weight:normal;letter-spacing:-0.05px;font-family:'Liberation Sans', sans-serif;">Katrina</div>
<div class="t" style="left:625.80px;top:465.12px;font-size:12.4px;line-height:12.4px;color:#1b1b1b;font-weight:normal;letter-spacing:-0.05px;font-family:'Liberation Sans', sans-serif;">Beauty</div>
<div class="t" style="left:736.30px;top:465.12px;font-size:12.4px;line-height:12.4px;color:#1b1b1b;font-weight:normal;letter-spacing:-0.05px;font-family:'Liberation Sans', sans-serif;">40000</div>
<div class="t" style="left:845.80px;top:465.12px;font-size:12.4px;line-height:12.4px;color:#1b1b1b;font-weight:normal;letter-spacing:-0.05px;font-family:'Liberation Sans', sans-serif;">Under Review</div>
<div class="t" style="left:955.30px;top:465.12px;font-size:12.4px;line-height:12.4px;color:#1b1b1b;font-weight:normal;letter-spacing:-0.05px;font-family:'Liberation Sans', sans-serif;">Approval started...</div>
<div class="r" style="left:512px;top:259px;width:871px;height:0;border-top:1px dotted #b58bb5;"></div>
<div class="r" style="left:512px;top:259px;width:0;height:442px;border-left:1px dotted #b58bb5;"></div>
<div class="r" style="left:1382px;top:259px;width:0;height:442px;border-left:1px dotted #9a6a9a;"></div>
<div class="r" style="left:514px;top:703px;width:762px;height:4px;background:#a8a8a8;border-radius:2px;"></div>
<svg class="s" style="left:612px;top:250px;" width="130" height="467" viewBox="0 0 130 467"><g fill="none" stroke-width="1.3"><line x1="9.6" y1="8" x2="9.6" y2="458" stroke="#7d3f7d"/><line x1="120.4" y1="8" x2="120.4" y2="458" stroke="#7d3f7d"/></g><line x1="9.5" y1="8" x2="120.5" y2="8" stroke="#7d3f7d" stroke-width="1.5"/><g stroke="#a677a6" stroke-width="1.6"><line x1="9.5" y1="458" x2="120.5" y2="458"/></g><circle cx="9.5" cy="8" r="5.8" fill="#fff" stroke="#9d629d" stroke-width="1.3"/><circle cx="65" cy="8" r="5.8" fill="#fff" stroke="#9d629d" stroke-width="1.3"/><circle cx="120" cy="8" r="5.8" fill="#fff" stroke="#9d629d" stroke-width="1.3"/><circle cx="9.5" cy="233" r="5.8" fill="#fff" stroke="#9d629d" stroke-width="1.3"/><circle cx="120" cy="233" r="5.8" fill="#fff" stroke="#9d629d" stroke-width="1.3"/><circle cx="9.5" cy="458" r="5.8" fill="#fff" stroke="#9d629d" stroke-width="1.3"/><circle cx="65" cy="458" r="5.8" fill="#fff" stroke="#9d629d" stroke-width="1.3"/><circle cx="120" cy="458" r="5.8" fill="#fff" stroke="#9d629d" stroke-width="1.3"/></svg>
<div class="r" style="left:463px;top:816px;width:1013px;height:8px;background:#a8a8a8;border-radius:4px;"></div>
<div class="r" style="left:453px;top:827px;width:1025px;height:53px;background:linear-gradient(90deg,#f1f1f1 0%,#f5f5f5 25%,#f2f2f2 55%,#efefef 100%);"></div>
<div class="r" style="left:453px;top:827px;width:1025px;height:1px;background:#dadada;"></div>
<div class="r" style="left:453px;top:827px;width:1px;height:53px;background:#d8d8d8;"></div>
<svg class="s" style="left:473px;top:845px;" width="24" height="18" viewBox="0 0 24 18"><rect x="1" y="1" width="21" height="15.5" rx="2" fill="#fff" stroke="#323130" stroke-width="1.4"/></svg>
<div class="t" style="left:502.00px;top:847.79px;font-size:16.2px;line-height:16.2px;color:#323130;font-weight:normal;letter-spacing:-0.45px;font-family:'Liberation Sans', sans-serif;">Screen1</div>
<svg class="s" style="left:568px;top:828px;" width="22" height="52" viewBox="0 0 22 52"><polyline points="4,0 18,26 4,52" fill="none" stroke="#d6d6d6" stroke-width="1.2"/></svg>
<svg class="s" style="left:598px;top:843px;" width="25" height="20" viewBox="0 0 25 20"><g fill="none" stroke="#323130" stroke-width="1.2"><rect x="1.5" y="2" width="21" height="16"/><line x1="1.5" y1="7" x2="22.5" y2="7"/><line x1="1.5" y1="10.7" x2="22.5" y2="10.7"/><line x1="1.5" y1="14.3" x2="22.5" y2="14.3"/><line x1="8.5" y1="7" x2="8.5" y2="18"/><line x1="15.5" y1="7" x2="15.5" y2="18"/></g><rect x="1.5" y="2" width="21" height="4" fill="#323130" opacity="0.55"/></svg>
<div class="t" style="left:628.70px;top:847.62px;font-size:16.4px;line-height:16.4px;color:#323130;font-weight:normal;letter-spacing:-0.35px;font-family:'Liberation Sans', sans-serif;">DataTable2</div>
<svg class="s" style="left:718px;top:828px;" width="22" height="52" viewBox="0 0 22 52"><polyline points="4,0 18,26 4,52" fill="none" stroke="#d6d6d6" stroke-width="1.2"/></svg>
<svg class="s" style="left:748px;top:843px;" width="25" height="20" viewBox="0 0 25 20"><g fill="none" stroke="#323130" stroke-width="1.2"><rect x="1.5" y="2" width="21" height="16"/><line x1="1.5" y1="7" x2="22.5" y2="7"/><line x1="1.5" y1="10.7" x2="22.5" y2="10.7"/><line x1="1.5" y1="14.3" x2="22.5" y2="14.3"/></g><rect x="1.5" y="2" width="21" height="4" fill="#323130" opacity="0.55"/><rect x="8.5" y="6.5" width="7" height="11.5" fill="#323130" opacity="0.85"/></svg>
<div class="t" style="left:778.70px;top:847.62px;font-size:16.4px;line-height:16.4px;color:#323130;font-weight:normal;letter-spacing:-0.27px;font-family:'Liberation Sans', sans-serif;">Teacher Qualific...</div>
<div class="r" style="left:1037.5px;top:853px;width:15.5px;height:1.4px;background:#323130;"></div>
<div class="r" style="left:1075px;top:852.5px;width:220px;height:2px;background:#4b4b4b;"></div>
<div class="r" style="left:1129px;top:843px;width:5.3px;height:18.5px;background:#4b4b4b;border-radius:1px;"></div>
<div class="r" style="left:1184.5px;top:848px;width:2.4px;height:10.7px;background:#4b4b4b;"></div>
<svg class="s" style="left:1311px;top:844px;" width="19" height="19" viewBox="0 0 19 19"><g stroke="#323130" stroke-width="1.4"><line x1="9.5" y1="1.5" x2="9.5" y2="17.5"/><line x1="1.5" y1="9.5" x2="17.5" y2="9.5"/></g></svg>
<div class="t" style="left:1358.50px;top:846.50px;font-size:16.3px;line-height:16.3px;color:#605e5c;font-weight:normal;letter-spacing:-0.9px;font-family:'Liberation Sans', sans-serif;">50</div>
<div class="t" style="left:1386.50px;top:848.23px;font-size:14.5px;line-height:14.5px;color:#605e5c;font-weight:normal;letter-spacing:0px;font-family:'Liberation Sans', sans-serif;">%</div>
<svg class="s" style="left:1429px;top:842px;" width="24" height="24" viewBox="0 0 24 24"><g fill="none" stroke="#1b1b1b" stroke-width="1.6"><line x1="4" y1="20" x2="20" y2="4"/><polyline points="13.8,3.5 20.5,3.5 20.5,10.2"/><polyline points="3.5,13.8 3.5,20.5 10.2,20.5"/></g></svg>
<div class="t" style="left:1502.30px;top:197.23px;font-size:13.9px;line-height:13.9px;color:#605e5c;font-weight:normal;letter-spacing:0.03px;font-family:'Liberation Sans', sans-serif;">DATA TABLE COLUMN</div>
<div class="t" style="left:1504.00px;top:230.45px;font-size:20.5px;line-height:20.5px;color:#323130;font-weight:bold;letter-spacing:0px;font-family:'Liberation Sans', sans-serif;">Teacher Qualification_Column2</div>
<svg class="s" style="left:1896px;top:211px;" width="20" height="28" viewBox="0 0 20 28"><polyline points="5,3 15.5,13.5 5,24" fill="none" stroke="#605e5c" stroke-width="1.5"/></svg>
<div class="t" style="left:1502.00px;top:277.65px;font-size:17.9px;line-height:17.9px;color:#323130;font-weight:bold;letter-spacing:0px;font-family:'Liberation Sans', sans-serif;">Properties</div>
<div class="t" style="left:1629.00px;top:277.14px;font-size:18.5px;line-height:18.5px;color:#323130;font-weight:normal;letter-spacing:0px;font-family:'Liberation Sans', sans-serif;">Advanced</div>
<div class="r" style="left:1499px;top:304px;width:94px;height:3px;background:#742774;border-radius:1.5px;"></div>
<div class="r" style="left:1480px;top:312px;width:440px;height:1.5px;background:#e1dfdd;"></div>
<div class="t" style="left:1497.00px;top:340.98px;font-size:16.8px;line-height:16.8px;color:#323130;font-weight:normal;letter-spacing:0px;font-family:'Liberation Sans', sans-serif;">Width</div>
<div class="t" style="left:1497.00px;top:384.67px;font-size:16.1px;line-height:16.1px;color:#323130;font-weight:normal;letter-spacing:0px;font-family:'Liberation Sans', sans-serif;">Visible</div>
<div class="t" style="left:1497.00px;top:428.57px;font-size:16.1px;line-height:16.1px;color:#323130;font-weight:normal;letter-spacing:0px;font-family:'Liberation Sans', sans-serif;">Can grow</div>
<div class="t" style="left:1497.00px;top:472.57px;font-size:16.1px;line-height:16.1px;color:#323130;font-weight:normal;letter-spacing:0px;font-family:'Liberation Sans', sans-serif;">Header Text</div>
<div class="t" style="left:1497.00px;top:516.57px;font-size:16.1px;line-height:16.1px;color:#323130;font-weight:normal;letter-spacing:0px;font-family:'Liberation Sans', sans-serif;">Is hyperlink</div>
<div class="r" style="left:1810px;top:330px;width:94px;height:32.5px;background:#fff;border:1px solid #c8c6c4;box-sizing:border-box;"></div>
<div class="t" style="left:1816.50px;top:340.28px;font-size:16.8px;line-height:16.8px;color:#323130;font-weight:normal;letter-spacing:-0.3px;font-family:'Liberation Sans', sans-serif;">160</div>
<div class="r" style="left:1848.6px;top:376px;width:55.4px;height:28px;background:#742774;border-radius:14px;"></div>
<svg class="s" style="left:1880px;top:382px;" width="18" height="16" viewBox="0 0 18 16"><circle cx="9.5" cy="8" r="7.8" fill="#fff"/></svg>
<div class="t" style="left:1816.00px;top:384.58px;font-size:16.8px;line-height:16.8px;color:#484644;font-weight:normal;letter-spacing:-0.3px;font-family:'Liberation Sans', sans-serif;">On</div>
<div class="r" style="left:1848.6px;top:420px;width:55.4px;height:28px;background:#742774;border-radius:14px;"></div>
<svg class="s" style="left:1880px;top:426px;" width="18" height="16" viewBox="0 0 18 16"><circle cx="9.5" cy="8" r="7.8" fill="#fff"/></svg>
<div class="t" style="left:1816.00px;top:428.58px;font-size:16.8px;line-height:16.8px;color:#484644;font-weight:normal;letter-spacing:-0.3px;font-family:'Liberation Sans', sans-serif;">On</div>
<div class="r" style="left:1711px;top:462px;width:193px;height:32.5px;background:#fff;border:1px solid #c8c6c4;box-sizing:border-box;"></div>
<div class="t" style="left:1716.50px;top:472.28px;font-size:16.8px;line-height:16.8px;color:#323130;font-weight:normal;letter-spacing:-0.15px;font-family:'Liberation Sans', sans-serif;">Qualification</div>
<div class="r" style="left:1848.6px;top:508px;width:55.4px;height:28px;background:#fff;border:1px solid #605e5c;border-radius:14px;box-sizing:border-box;"></div>
<svg class="s" style="left:1853px;top:513px;" width="18" height="18" viewBox="0 0 18 18"><circle cx="8.6" cy="9" r="7.8" fill="#605e5c"/></svg>
<div class="t" style="left:1815.20px;top:516.58px;font-size:16.8px;line-height:16.8px;color:#484644;font-weight:normal;letter-spacing:-0.3px;font-family:'Liberation Sans', sans-serif;">Off</div>
<div class="r" style="left:60px;top:880px;width:359px;height:3px;background:#ffffff;border-top:1px solid #c8c8c8;box-sizing:border-box;"></div>
<div class="r" style="left:546px;top:880px;width:61px;height:3px;background:#e6f1f5;"></div>
<div class="r" style="left:1000px;top:880px;width:920px;height:3px;background:#dce6ed;"></div>
</body></html>
